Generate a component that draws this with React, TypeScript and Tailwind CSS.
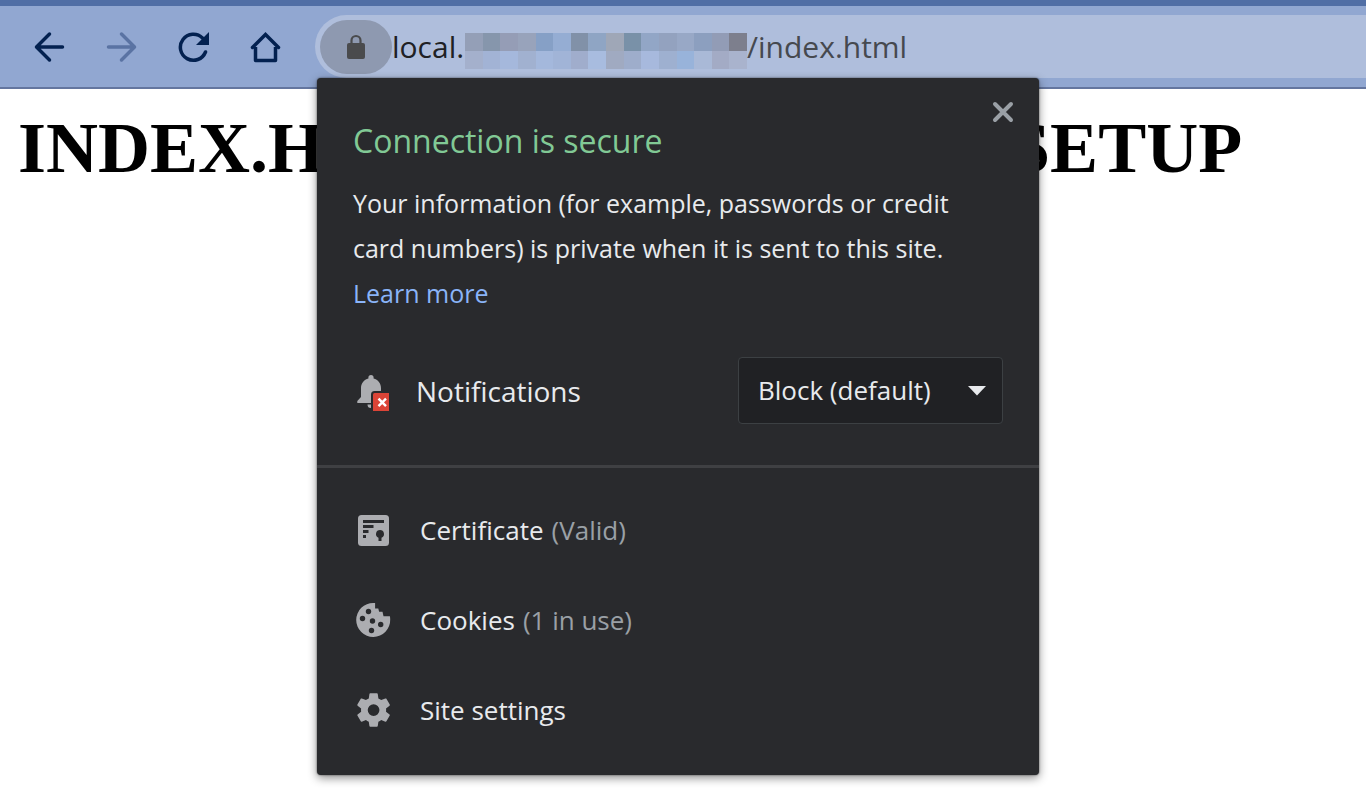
/**
 * Browser toolbar with the site information popup open over a plain page.
 */

import { useState } from 'react';
import type { ReactNode } from 'react';

const MASK_TOP = [
  '#949fb7', '#8696ac', '#959db6', '#98a3bb', '#86a0c6', '#95add3', '#8191a8', '#8fa5c4',
  '#9fa7b7', '#7991a8', '#92a6c6', '#93a2bf', '#98a8c6', '#8c9fbf', '#929cb6', '#7d7f8d',
];

const MASK_BOTTOM = [
  '#a4b0cc', '#a2b3d5', '#a5b8dc', '#a1b1d0', '#a4b8dc', '#a1b4d7', '#a0adcc', '#a8bcdf',
  '#a0aac1', '#9eadcb', '#a7b9dd', '#9eb0d0', '#98b3da', '#a9b9d7', '#a3abc5', '#a9b3cd',
];

interface NavButtonProps {
  label: string;
  disabled?: boolean;
  children: ReactNode;
}

function NavButton({ label, disabled, children }: NavButtonProps) {
  return (
    <button
      type="button"
      aria-label={label}
      disabled={disabled}
      className="flex size-10 items-center justify-center text-[#032150] disabled:text-[#5a73a3]"
    >
      <svg className="size-8" viewBox="0 0 32 32" fill="none" stroke="currentColor" strokeWidth={3.5}>
        {children}
      </svg>
    </button>
  );
}

function AddressMask() {
  return (
    <div className="mt-2 flex w-[282px] shrink-0 flex-col" aria-hidden="true">
      {[MASK_TOP, MASK_BOTTOM].map((row, i) => (
        <div key={i} className="flex">
          {row.map((color, j) => (
            <span key={j} className="h-[18px] flex-1" style={{ backgroundColor: color }} />
          ))}
        </div>
      ))}
    </div>
  );
}

function BellBlockedIcon() {
  return (
    <svg className="h-10 w-9 shrink-0" viewBox="0 -4 36 40">
      <path
        fill="#acadb1"
        d="M15 0a2.6 2.6 0 0 0-2.6 2.6v1C8 4.7 5 8.5 5 13v9l-3.700 4v2h27v-2L25 22v-9c0-4.500-3-8.300-7.400-9.400v-1A2.600 2.600 0 0 0 15 0zM11.500 29.500h7a3.500 3.500 0 0 1-7 0z"
      />
      <path fill="#292a2d" d="M18.500 16H36v20H15V19.500a3.500 3.500 0 0 1 3.500-3.500z" />
      <path fill="#db4437" d="M18.500 18H33v18H17V19.500a1.500 1.500 0 0 1 1.500-1.500z" />
      <path stroke="#fff" strokeWidth={2.4} d="m22.500 23.700 7.500 7.500m0-7.500-7.500 7.500" />
    </svg>
  );
}

function CertificateIcon() {
  return (
    <svg className="size-9 shrink-0" viewBox="0 0 36 36">
      <rect x="2" y="3" width="31" height="31" rx="3.5" fill="#acadb1" />
      <path
        fill="#292a2d"
        d="M7 8h21v3H7zM7 13h10.500v3H7zM7 18h5.500v3H7zM7 23h3v3H7zM24 18a4 4 0 0 1 1.500 7.700V29h-3v-3.300A4 4 0 0 1 24 18z"
      />
    </svg>
  );
}

function CookieIcon() {
  return (
    <svg className="size-9 shrink-0" viewBox="0 0 36 36">
      <path
        fill="#acadb1"
        d="M17.500 1c.6 0 1 0 1.600.1v5.400h3.200l.8 3.200h3.400l1 4.500h6.400c.2 1 .3 2.200.3 3.300A17 17 0 1 1 17.500 1z"
      />
      <g fill="#292a2d">
        <circle cx="12.5" cy="9.5" r="2.7" />
        <circle cx="6.5" cy="16.5" r="2.7" />
        <circle cx="16.5" cy="19" r="2.7" />
        <circle cx="24.7" cy="22.5" r="2.7" />
        <circle cx="15.5" cy="28.5" r="2.7" />
      </g>
    </svg>
  );
}

function GearIcon() {
  return (
    <svg className="size-9 shrink-0" viewBox="1.5 1.2 21.5 21.5">
      <path
        fill="#acadb1"
        d="M19.430 12.980c.04-.32.07-.64.07-.98s-.03-.66-.07-.98l2.110-1.650c.19-.15.24-.42.12-.64l-2-3.460c-.12-.22-.39-.3-.61-.22l-2.490 1c-.52-.4-1.080-.73-1.690-.98l-.38-2.650A.488.488 0 0 0 14 2h-4c-.25 0-.46.18-.49.42l-.38 2.650c-.61.25-1.170.59-1.690.98l-2.490-1c-.23-.09-.49 0-.61.22l-2 3.460c-.13.22-.07.49.12.64l2.110 1.650c-.04.32-.07.65-.07.98s.03.66.07.98l-2.110 1.650c-.19.15-.24.42-.12.64l2 3.460c.12.22.39.3.61.22l2.490-1c.52.4 1.080.73 1.690.98l.38 2.650c.03.24.24.42.49.42h4c.25 0 .46-.18.49-.42l.38-2.650c.61-.25 1.170-.59 1.690-.98l2.490 1c.23.09.49 0 .61-.22l2-3.460c.12-.22.07-.49-.12-.64l-2.110-1.650zM12 15.500a3.500 3.500 0 1 1 0-7 3.500 3.500 0 0 1 0 7z"
      />
    </svg>
  );
}

interface InfoRowProps {
  icon: ReactNode;
  label: string;
  detail?: string;
}

function InfoRow({ icon, label, detail }: InfoRowProps) {
  return (
    <button type="button" className="flex h-[90px] w-full items-center px-[39px] text-left text-[26px]">
      {icon}
      <span className="ml-7">{label}</span>
      {detail && <span className="ml-2 text-[#9aa0a6]">{detail}</span>}
    </button>
  );
}

function SiteInfoPopup({ onClose }: { onClose: () => void }) {
  const [permission, setPermission] = useState('default');

  return (
    <div
      role="dialog"
      aria-labelledby="site-info-title"
      className="absolute top-full left-0.5 z-10 w-[722px] rounded bg-[#292a2d] pb-5 text-[#e8eaed] shadow-[0_3px_10px_rgba(0,0,0,0.45),0_0_2px_rgba(0,0,0,0.6)]"
    >
      <button
        type="button"
        aria-label="Close"
        onClick={onClose}
        className="absolute top-[18px] right-5 flex size-8 items-center justify-center text-[#9aa0a6]"
      >
        <svg className="size-6" viewBox="0 0 24 24" stroke="currentColor" strokeWidth={4} strokeLinecap="round">
          <path d="m4 4 16 16m0-16-16 16" />
        </svg>
      </button>

      {/* Connection state */}
      <div className="px-9 pt-10">
        <h2 id="site-info-title" className="text-[32px] leading-[45px] text-[#81c995]">
          Connection is secure
        </h2>
        <p className="mt-[18px] text-[25px] leading-[45px]">
          Your information (for example, passwords or credit card numbers) is private when it is sent to this site.{' '}
          <a href="#learn-more" className="text-[#8ab4f8]">
            Learn more
          </a>
        </p>
      </div>

      {/* Permissions */}
      <div className="flex items-center py-[41px] pr-9 pl-[39px]">
        <BellBlockedIcon />
        <label htmlFor="notifications" className="ml-6 flex-1 text-[28px]">
          Notifications
        </label>
        <div className="relative">
          <select
            id="notifications"
            value={permission}
            onChange={(e) => setPermission(e.target.value)}
            className="block h-[67px] w-[265px] appearance-none rounded border border-[#3c4043] bg-[#202124] pl-[19px] text-[26px]"
          >
            <option value="default">Block (default)</option>
            <option value="allow">Allow</option>
            <option value="block">Block</option>
          </select>
          <svg
            className="pointer-events-none absolute top-[29px] right-[17px] h-2.5 w-[18px]"
            viewBox="0 0 18 10"
            fill="currentColor"
          >
            <path d="M0 0h18l-9 9.500z" />
          </svg>
        </div>
      </div>

      {/* Site data */}
      <div className="border-t-[3px] border-[#3f4043] pt-[17px]">
        <InfoRow icon={<CertificateIcon />} label="Certificate" detail="(Valid)" />
        <InfoRow icon={<CookieIcon />} label="Cookies" detail="(1 in use)" />
        <InfoRow icon={<GearIcon />} label="Site settings" />
      </div>
    </div>
  );
}

export default function App() {
  const [isPopupOpen, setIsPopupOpen] = useState(true);

  return (
    <div className="min-h-screen overflow-x-hidden bg-white font-['Open_Sans','Noto_Sans',sans-serif]">
      <header className="flex border-t-6 border-b-2 border-t-[#506ea5] border-b-[#64769f] bg-[#91a7d1] pt-[9px] pb-[9px] pl-[29px]">
        <nav className="mr-[30px] flex items-center gap-8" aria-label="Browser">
          <NavButton label="Back">
            <path strokeLinecap="round" strokeLinejoin="round" d="M16.500 3 3.500 16l13 13M4 16h25.500" />
          </NavButton>
          <NavButton label="Forward" disabled>
            <path strokeLinecap="round" strokeLinejoin="round" d="m16.500 3 13 13-13 13M29 16H3.500" />
          </NavButton>
          <NavButton label="Reload">
            <path strokeLinecap="round" d="M25.500 7A13 13 0 1 0 28.500 21" />
            <path fill="currentColor" stroke="none" d="M32 1v13H19z" />
          </NavButton>
          <NavButton label="Home">
            <path strokeLinejoin="round" d="M6.500 16v13.500h20V16" />
            <path strokeLinecap="round" d="M3.500 16.500 16.500 3.500l13 13" />
          </NavButton>
        </nav>

        <div className="relative flex h-[63px] flex-1 items-center rounded-l-full bg-[#afbedc] pl-[5px] text-[30px]">
          <button
            type="button"
            aria-label="View site information"
            onClick={() => setIsPopupOpen(!isPopupOpen)}
            className="flex h-[54px] w-[72px] shrink-0 items-center justify-center rounded-full bg-[#8e99b0] text-[#4a4b4d]"
          >
            <svg className="h-[26px] w-5" viewBox="0 0 20 26">
              <rect x="1" y="9" width="18" height="16" rx="2" fill="currentColor" />
              <path d="M5.500 10V6.500a4.500 4.500 0 0 1 9 0V10" fill="none" stroke="currentColor" strokeWidth={2.2} />
            </svg>
          </button>
          <span className="w-[73px] shrink-0 text-[#202124]">local.</span>
          <AddressMask />
          <span className="text-[#46494f]">/index.html</span>
          {isPopupOpen && <SiteInfoPopup onClose={() => setIsPopupOpen(false)} />}
        </div>
      </header>

      <main className="px-[18px] pt-[18px]">
        <h1 className="font-['Liberation_Serif',serif] text-[72px] leading-[83px] font-bold whitespace-nowrap">
          INDEX.HTML FROM LOCAL SETUP
        </h1>
      </main>
    </div>
  );
}
